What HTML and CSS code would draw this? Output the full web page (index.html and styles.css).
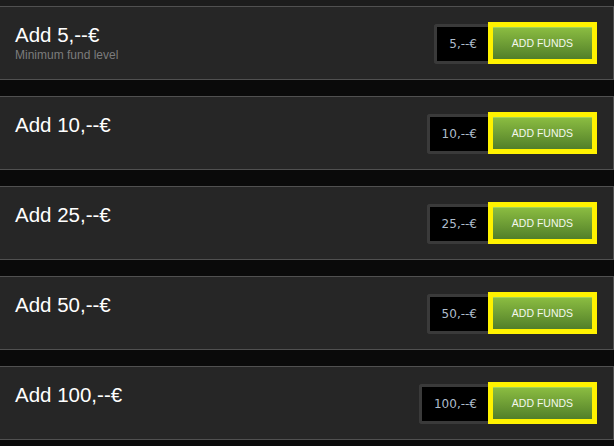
FILE: index.html
```html
<!DOCTYPE html>
<html>
<head>
<meta charset="utf-8">
<link rel="stylesheet" href="styles.css">
</head>
<body>
<div class="top"></div>
<div class="list">
  <div class="row">
    <div class="info">
      <div class="title">Add 5,--€</div>
      <div class="sub">Minimum fund level</div>
    </div>
    <div class="actions">
      <div class="price">5,--€</div>
      <div class="btn"><span>ADD FUNDS</span></div>
    </div>
  </div>
  <div class="row">
    <div class="info">
      <div class="title">Add 10,--€</div>
    </div>
    <div class="actions">
      <div class="price">10,--€</div>
      <div class="btn"><span>ADD FUNDS</span></div>
    </div>
  </div>
  <div class="row">
    <div class="info">
      <div class="title">Add 25,--€</div>
    </div>
    <div class="actions">
      <div class="price">25,--€</div>
      <div class="btn"><span>ADD FUNDS</span></div>
    </div>
  </div>
  <div class="row">
    <div class="info">
      <div class="title">Add 50,--€</div>
    </div>
    <div class="actions">
      <div class="price">50,--€</div>
      <div class="btn"><span>ADD FUNDS</span></div>
    </div>
  </div>
  <div class="row">
    <div class="info">
      <div class="title">Add 100,--€</div>
    </div>
    <div class="actions">
      <div class="price">100,--€</div>
      <div class="btn"><span>ADD FUNDS</span></div>
    </div>
  </div>
</div>
</body>
</html>
```
FILE: styles.css
```css
html, body {
  margin: 0;
  padding: 0;
  background: #0a0a0a;
  width: 614px;
  height: 446px;
  overflow: hidden;
  font-family: "Liberation Sans", Arial, sans-serif;
}
.top {
  height: 6px;
  background: #1c1c1c;
}
.list {
  display: flex;
  flex-direction: column;
  gap: 16px;
}
.row {
  height: 72px;
  background: #262626;
  border-top: 1px solid #505050;
  border-bottom: 1px solid #505050;
  border-right: 1px solid #505050;
  display: flex;
  justify-content: space-between;
  align-items: center;
  padding: 0 16px 0 15px;
}
.info {
  align-self: flex-start;
  padding-top: 16px;
}
.title {
  color: #ffffff;
  font-size: 20.5px;
  line-height: 24px;
}
.sub {
  color: #7c7c7c;
  font-size: 12px;
  line-height: 14px;
  margin-top: 1px;
}
.actions {
  display: flex;
  align-items: center;
}
.price {
  height: 34px;
  background: #000;
  border: 3px solid #3a3a3a;
  border-right: none;
  border-radius: 3px 0 0 3px;
  padding: 0 11px 0 12px;
  display: flex;
  align-items: center;
  color: #aebccb;
  font-family: "DejaVu Sans", Verdana, sans-serif;
  font-size: 12px;
  margin-top: 1px;
}
.btn {
  border: 5px solid #fff200;
  width: 99px;
  height: 32px;
  background: linear-gradient(#8cbe42, #527f29);
  box-shadow: inset 0 1px 0 #a3d25a;
  display: flex;
  align-items: center;
  justify-content: center;
  color: #f4f8ee;
  font-size: 10.5px;
}
```
